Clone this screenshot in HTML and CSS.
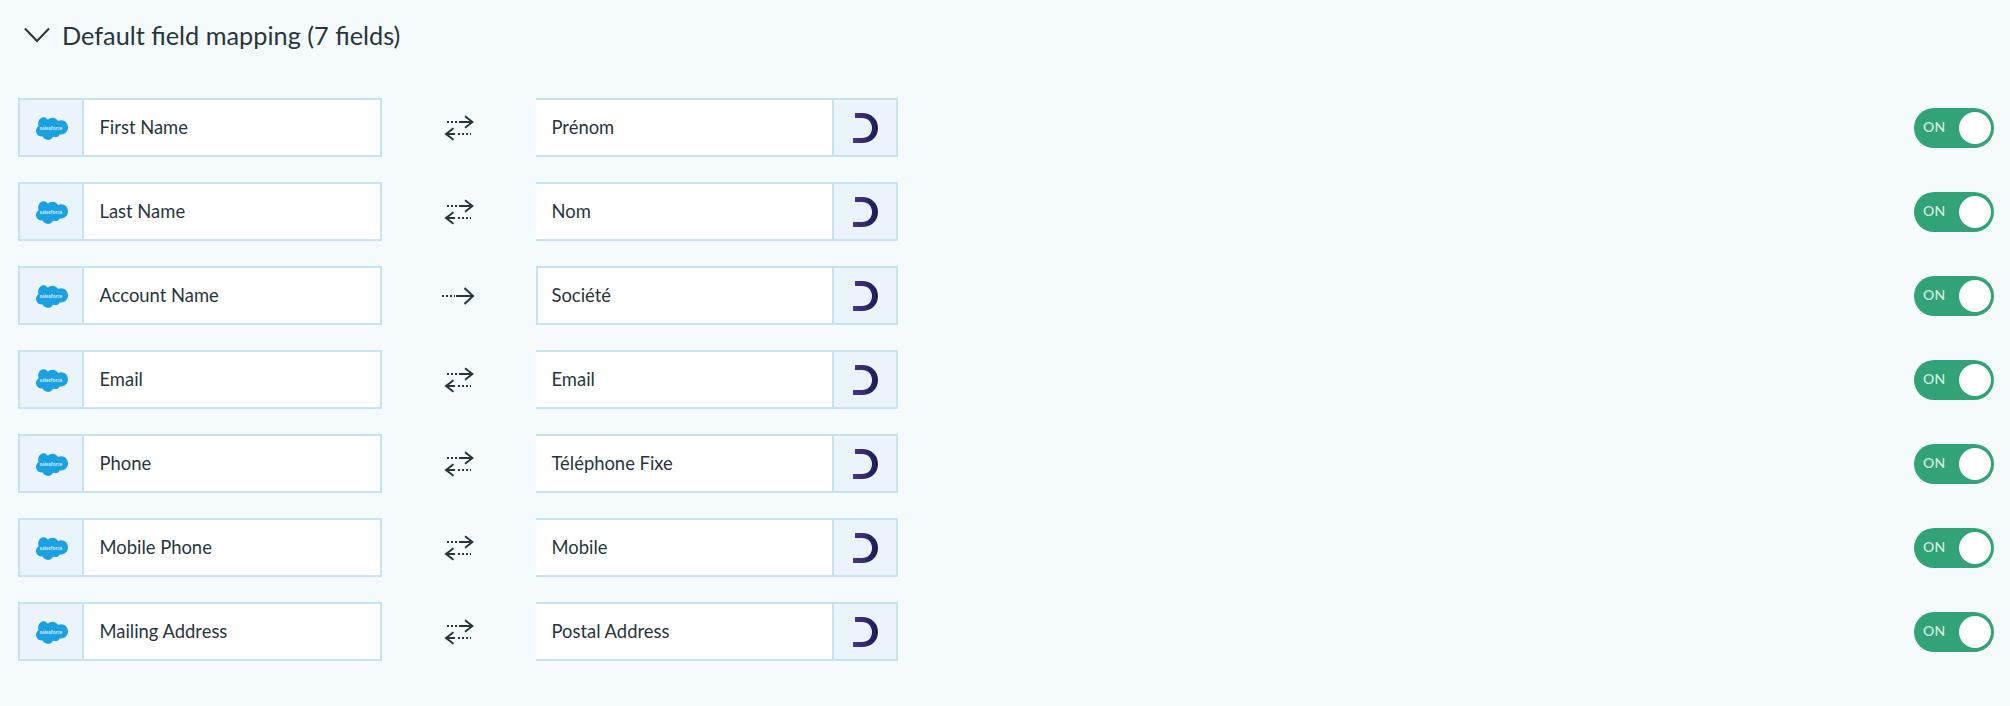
FILE: index.html
```html
<!DOCTYPE html>
<html lang="en">
<head>
<meta charset="utf-8">
<title>Default field mapping</title>
<link rel="stylesheet" href="styles.css">
</head>
<body>
<svg class="defs" width="0" height="0" aria-hidden="true">
  <defs>
    <symbol id="sf" viewBox="0 0 32 22">
      <path fill="#1ba1e2" d="M13 3.200C14.100 2 15.700 1.300 17.400 1.300c2.300 0 4.300 1.200 5.300 3 .9-.4 1.900-.6 2.900-.6 3.700 0 6.400 3 6.400 6.700s-2.700 6.700-6.400 6.700c-.5 0-.9 0-1.300-.1-.8 1.500-2.500 2.500-4.300 2.500-.8 0-1.500-.2-2.100-.5-.8 1.900-2.700 3.200-4.900 3.200-2.300 0-4.200-1.400-5-3.400-.3.100-.7.100-1.100.1-2.800 0-5-2.300-5-5.100 0-1.900 1-3.500 2.500-4.400-.3-.7-.5-1.500-.5-2.300C3.900 3.100 6.400.8 9.300.8c1.500 0 2.800.9 3.700 2.400z"/>
      <text class="sf-text" x="16" y="12.800" text-anchor="middle">salesforce</text>
    </symbol>
    <linearGradient id="moon" x1="0" y1="0" x2="1" y2="0">
      <stop offset="0" stop-color="#4b3488"/>
      <stop offset="1" stop-color="#1a1a52"/>
    </linearGradient>
    <symbol id="dd" viewBox="0 0 26 32">
      <path fill="url(#moon)" d="M2 1H9C18 1 25 7 25 16C25 25 18 31 9 31H0V26H9C15 26 19 22 19 16C19 10 15 6 9 6H2Z"/>
    </symbol>
    <symbol id="both" viewBox="0 0 30 26">
      <g fill="none" stroke="#27363c" stroke-width="2">
        <path d="M15 7H28.500M21 1.200 28.500 7 21 12.800M2 19H11M9.500 13.200 2 19l7.500 5.800"/>
        <path stroke-dasharray="2 2" d="M3 7H14M14 19H27"/>
      </g>
    </symbol>
    <symbol id="one" viewBox="0 0 34 18">
      <g fill="none" stroke="#27363c" stroke-width="2">
        <path d="M14 9H31M22.500 1 31 9l-8.500 8"/>
        <path stroke-dasharray="2 2" d="M0 9H13"/>
      </g>
    </symbol>
  </defs>
</svg>
<main class="page">
  <header class="heading">
    <svg class="chevron" viewBox="0 0 26 16" aria-hidden="true"><path d="M1 1.500 13 14 25 1.500"/></svg>
    <h1 class="title">Default field mapping (7 fields)</h1>
  </header>
  <div class="rows">
    <div class="row">
      <div class="field field-left"><span class="cell"><svg class="logo-sf"><use href="#sf"/></svg></span><span class="name">First Name</span></div>
      <div class="direction"><svg class="arrow-both"><use href="#both"/></svg></div>
      <div class="field field-right"><span class="name">Prénom</span><span class="cell cell-end"><svg class="logo-dd"><use href="#dd"/></svg></span></div>
      <div class="toggle"><span class="toggle-label">ON</span><span class="knob"></span></div>
    </div>
    <div class="row">
      <div class="field field-left"><span class="cell"><svg class="logo-sf"><use href="#sf"/></svg></span><span class="name">Last Name</span></div>
      <div class="direction"><svg class="arrow-both"><use href="#both"/></svg></div>
      <div class="field field-right"><span class="name">Nom</span><span class="cell cell-end"><svg class="logo-dd"><use href="#dd"/></svg></span></div>
      <div class="toggle"><span class="toggle-label">ON</span><span class="knob"></span></div>
    </div>
    <div class="row">
      <div class="field field-left"><span class="cell"><svg class="logo-sf"><use href="#sf"/></svg></span><span class="name">Account Name</span></div>
      <div class="direction"><svg class="arrow-one"><use href="#one"/></svg></div>
      <div class="field field-right field-boxed"><span class="name">Société</span><span class="cell cell-end"><svg class="logo-dd"><use href="#dd"/></svg></span></div>
      <div class="toggle"><span class="toggle-label">ON</span><span class="knob"></span></div>
    </div>
    <div class="row">
      <div class="field field-left"><span class="cell"><svg class="logo-sf"><use href="#sf"/></svg></span><span class="name">Email</span></div>
      <div class="direction"><svg class="arrow-both"><use href="#both"/></svg></div>
      <div class="field field-right"><span class="name">Email</span><span class="cell cell-end"><svg class="logo-dd"><use href="#dd"/></svg></span></div>
      <div class="toggle"><span class="toggle-label">ON</span><span class="knob"></span></div>
    </div>
    <div class="row">
      <div class="field field-left"><span class="cell"><svg class="logo-sf"><use href="#sf"/></svg></span><span class="name">Phone</span></div>
      <div class="direction"><svg class="arrow-both"><use href="#both"/></svg></div>
      <div class="field field-right"><span class="name">Téléphone Fixe</span><span class="cell cell-end"><svg class="logo-dd"><use href="#dd"/></svg></span></div>
      <div class="toggle"><span class="toggle-label">ON</span><span class="knob"></span></div>
    </div>
    <div class="row">
      <div class="field field-left"><span class="cell"><svg class="logo-sf"><use href="#sf"/></svg></span><span class="name">Mobile Phone</span></div>
      <div class="direction"><svg class="arrow-both"><use href="#both"/></svg></div>
      <div class="field field-right"><span class="name">Mobile</span><span class="cell cell-end"><svg class="logo-dd"><use href="#dd"/></svg></span></div>
      <div class="toggle"><span class="toggle-label">ON</span><span class="knob"></span></div>
    </div>
    <div class="row">
      <div class="field field-left"><span class="cell"><svg class="logo-sf"><use href="#sf"/></svg></span><span class="name">Mailing Address</span></div>
      <div class="direction"><svg class="arrow-both"><use href="#both"/></svg></div>
      <div class="field field-right"><span class="name">Postal Address</span><span class="cell cell-end"><svg class="logo-dd"><use href="#dd"/></svg></span></div>
      <div class="toggle"><span class="toggle-label">ON</span><span class="knob"></span></div>
    </div>
  </div>
</main>
</body>
</html>
```
FILE: styles.css
```css
* { box-sizing: border-box; }

html, body { margin: 0; height: 100%; }

body {
  background: #f5fafd;
  color: #27363c;
  font-family: "Lato", "Liberation Sans", sans-serif;
}

.defs { display: block; height: 0; }

.page { padding: 0 16px 0 18px; }

.heading {
  display: flex;
  align-items: center;
  height: 70px;
  padding-left: 6px;
  gap: 12px;
}

.chevron { width: 26px; height: 16px; display: block; }
.chevron path { fill: none; stroke: #27363c; stroke-width: 2; }

.title {
  margin: 0;
  font-size: 25.3px;
  font-weight: 400;
  line-height: 30px;
}

.rows {
  display: flex;
  flex-direction: column;
  gap: 25px;
  padding-top: 28px;
}

.row { display: flex; align-items: center; height: 59px; }

.field {
  display: flex;
  align-items: stretch;
  width: 362px;
  height: 59px;
  background: #fff;
  border: 2px solid #c5e3f0;
  font-size: 18.4px;
}

.field-left { width: 364px; }
.field-right { border-left: 0; }
.field-boxed { border-left: 2px solid #c5e3f0; }

.cell {
  display: flex;
  align-items: center;
  justify-content: center;
  flex: none;
  width: 64px;
  background: #ebf4fa;
  border-right: 2px solid #c5e3f0;
}

.cell-end {
  width: 64px;
  border-right: 0;
  border-left: 2px solid #c5e3f0;
}

.name {
  flex: 1;
  display: flex;
  align-items: center;
  padding: 0 0 2px 15.5px;
  line-height: 22px;
}

.field-right .name { padding-left: 15.5px; }
.field-boxed .name { padding-left: 13.5px; }

.logo-sf { width: 34px; height: 24px; display: block; }
.sf-text { font-family: "Lato", sans-serif; font-size: 4.800px; font-weight: 700; fill: #d5eefa; }
.logo-dd { width: 26px; height: 32px; display: block; margin-left: 2px; }

.direction {
  display: flex;
  align-items: center;
  justify-content: center;
  flex: none;
  width: 154px;
}

.arrow-both { width: 30px; height: 26px; display: block; }
.arrow-one { width: 34px; height: 18px; display: block; }

.toggle {
  display: flex;
  align-items: center;
  justify-content: space-between;
  width: 80px;
  height: 40px;
  margin-left: auto;
  padding: 0 3px 0 9px;
  background: #32a376;
  border-radius: 20px;
}

.toggle-label {
  color: #d8efe6;
  font-size: 14px;
  font-weight: 500;
  letter-spacing: .2px;
  padding-bottom: 2px;
}

.knob {
  width: 32px;
  height: 32px;
  background: #fff;
  border-radius: 50%;
}
```
